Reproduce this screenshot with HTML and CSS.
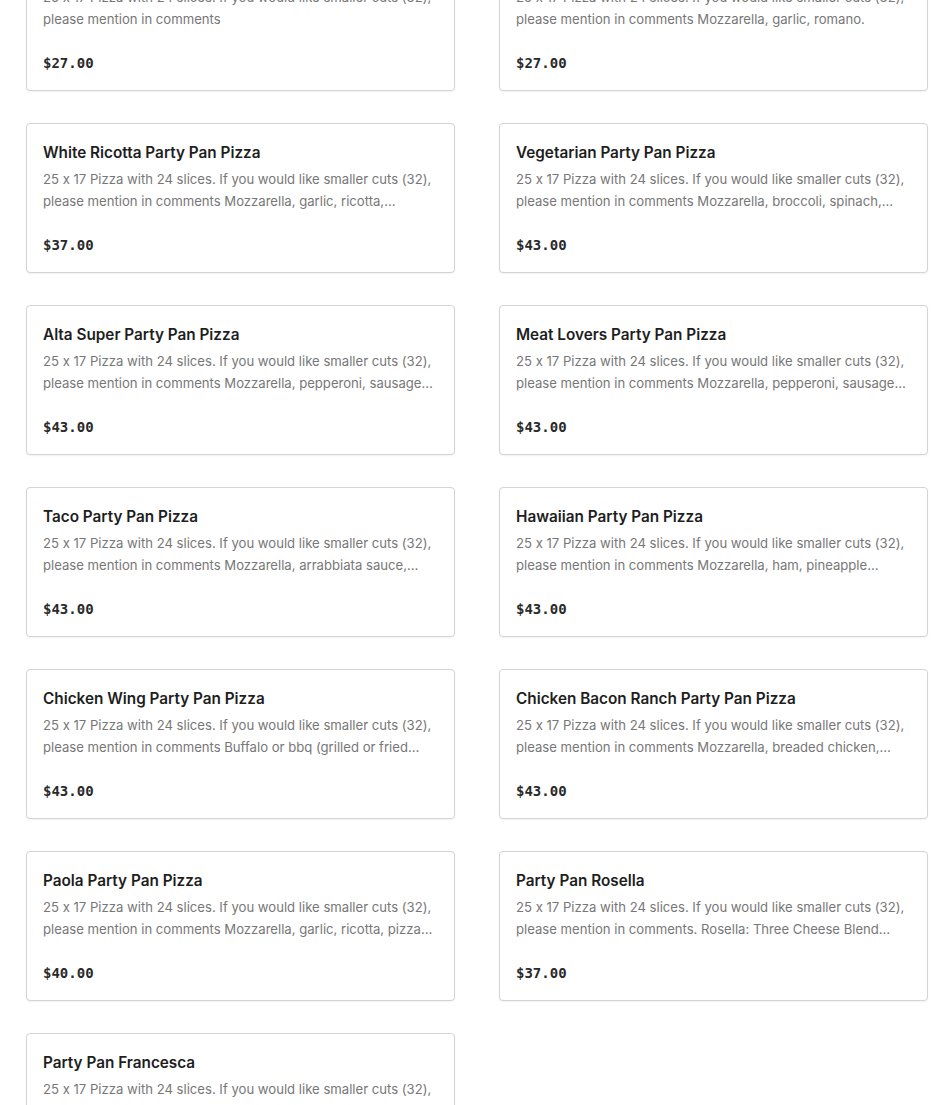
FILE: index.html
```html
<!DOCTYPE html>
<html lang="en">
<head>
<meta charset="utf-8">
<title>Party Pan Pizza</title>
<link rel="stylesheet" href="styles.css">
</head>
<body>
<main class="menu">
  <div class="grid">
    <article class="card">
      <h3 class="title">Grandma Party Pan Pizza</h3>
      <p class="desc">25 x 17 Pizza with 24 slices. If you would like smaller cuts (32), please mention in comments</p>
      <div class="price">$27.00</div>
    </article>
    <article class="card">
      <h3 class="title">Garlic Party Pan Pizza</h3>
      <p class="desc">25 x 17 Pizza with 24 slices. If you would like smaller cuts (32), please mention in comments Mozzarella, garlic, romano.</p>
      <div class="price">$27.00</div>
    </article>
    <article class="card">
      <h3 class="title">White Ricotta Party Pan Pizza</h3>
      <p class="desc">25 x 17 Pizza with 24 slices. If you would like smaller cuts (32), please mention in comments Mozzarella, garlic, ricotta, romano, basil.</p>
      <div class="price">$37.00</div>
    </article>
    <article class="card">
      <h3 class="title">Vegetarian Party Pan Pizza</h3>
      <p class="desc">25 x 17 Pizza with 24 slices. If you would like smaller cuts (32), please mention in comments Mozzarella, broccoli, spinach, mushrooms, peppers.</p>
      <div class="price">$43.00</div>
    </article>
    <article class="card">
      <h3 class="title">Alta Super Party Pan Pizza</h3>
      <p class="desc">25 x 17 Pizza with 24 slices. If you would like smaller cuts (32), please mention in comments Mozzarella, pepperoni, sausage meatballs, peppers, onions.</p>
      <div class="price">$43.00</div>
    </article>
    <article class="card">
      <h3 class="title">Meat Lovers Party Pan Pizza</h3>
      <p class="desc">25 x 17 Pizza with 24 slices. If you would like smaller cuts (32), please mention in comments Mozzarella, pepperoni, sausage meatballs, bacon, ham.</p>
      <div class="price">$43.00</div>
    </article>
    <article class="card">
      <h3 class="title">Taco Party Pan Pizza</h3>
      <p class="desc">25 x 17 Pizza with 24 slices. If you would like smaller cuts (32), please mention in comments Mozzarella, arrabbiata sauce, ground beef, lettuce.</p>
      <div class="price">$43.00</div>
    </article>
    <article class="card">
      <h3 class="title">Hawaiian Party Pan Pizza</h3>
      <p class="desc">25 x 17 Pizza with 24 slices. If you would like smaller cuts (32), please mention in comments Mozzarella, ham, pineapple chunks.</p>
      <div class="price">$43.00</div>
    </article>
    <article class="card">
      <h3 class="title">Chicken Wing Party Pan Pizza</h3>
      <p class="desc">25 x 17 Pizza with 24 slices. If you would like smaller cuts (32), please mention in comments Buffalo or bbq (grilled or fried chicken), mozzarella.</p>
      <div class="price">$43.00</div>
    </article>
    <article class="card">
      <h3 class="title">Chicken Bacon Ranch Party Pan Pizza</h3>
      <p class="desc">25 x 17 Pizza with 24 slices. If you would like smaller cuts (32), please mention in comments Mozzarella, breaded chicken, bacon, ranch.</p>
      <div class="price">$43.00</div>
    </article>
    <article class="card">
      <h3 class="title">Paola Party Pan Pizza</h3>
      <p class="desc">25 x 17 Pizza with 24 slices. If you would like smaller cuts (32), please mention in comments Mozzarella, garlic, ricotta, pizza sauce, basil.</p>
      <div class="price">$40.00</div>
    </article>
    <article class="card">
      <h3 class="title">Party Pan Rosella</h3>
      <p class="desc">25 x 17 Pizza with 24 slices. If you would like smaller cuts (32), please mention in comments. Rosella: Three Cheese Blend (mozzarella, romano, ricotta) with vodka sauce.</p>
      <div class="price">$37.00</div>
    </article>
    <article class="card">
      <h3 class="title">Party Pan Francesca</h3>
      <p class="desc">25 x 17 Pizza with 24 slices. If you would like smaller cuts (32), please mention in comments Mozzarella, fresh tomato, basil.</p>
      <div class="price">$40.00</div>
    </article>
  </div>
</main>
</body>
</html>
```
FILE: styles.css
```css
html, body {
  margin: 0;
  padding: 0;
  background: #ffffff;
}
body {
  font-family: Inter, "Noto Sans", "Liberation Sans", sans-serif;
  font-feature-settings: "calt" 0;
  overflow: hidden;
}
.menu {
  padding: 0 22px 0 26px;
}
.grid {
  margin-top: -59px;
  display: grid;
  grid-template-columns: 429px 429px;
  column-gap: 44px;
  row-gap: 32px;
}
.card {
  box-sizing: border-box;
  height: 150px;
  border: 1px solid #d4d4d4;
  border-radius: 4px;
  box-shadow: 0 1px 2px rgba(0,0,0,0.06);
  padding: 17px 16px 17px 16px;
  display: flex;
  flex-direction: column;
  background: #fff;
}
.title {
  margin: 0;
  font-size: 15.3px;
  line-height: 24px;
  font-weight: 600;
  color: #1e1e1e;
}
.desc {
  margin: 3px 0 0 0;
  font-size: 13.12px;
  line-height: 22px;
  color: #777777;
  display: -webkit-box;
  -webkit-line-clamp: 2;
  -webkit-box-orient: vertical;
  overflow: hidden;
}
.price {
  margin-top: auto;
  font-family: "DejaVu Sans Mono", "Liberation Mono", monospace;
  font-weight: 700;
  font-size: 14px;
  line-height: 20px;
  color: #2a2a2a;
}
```
